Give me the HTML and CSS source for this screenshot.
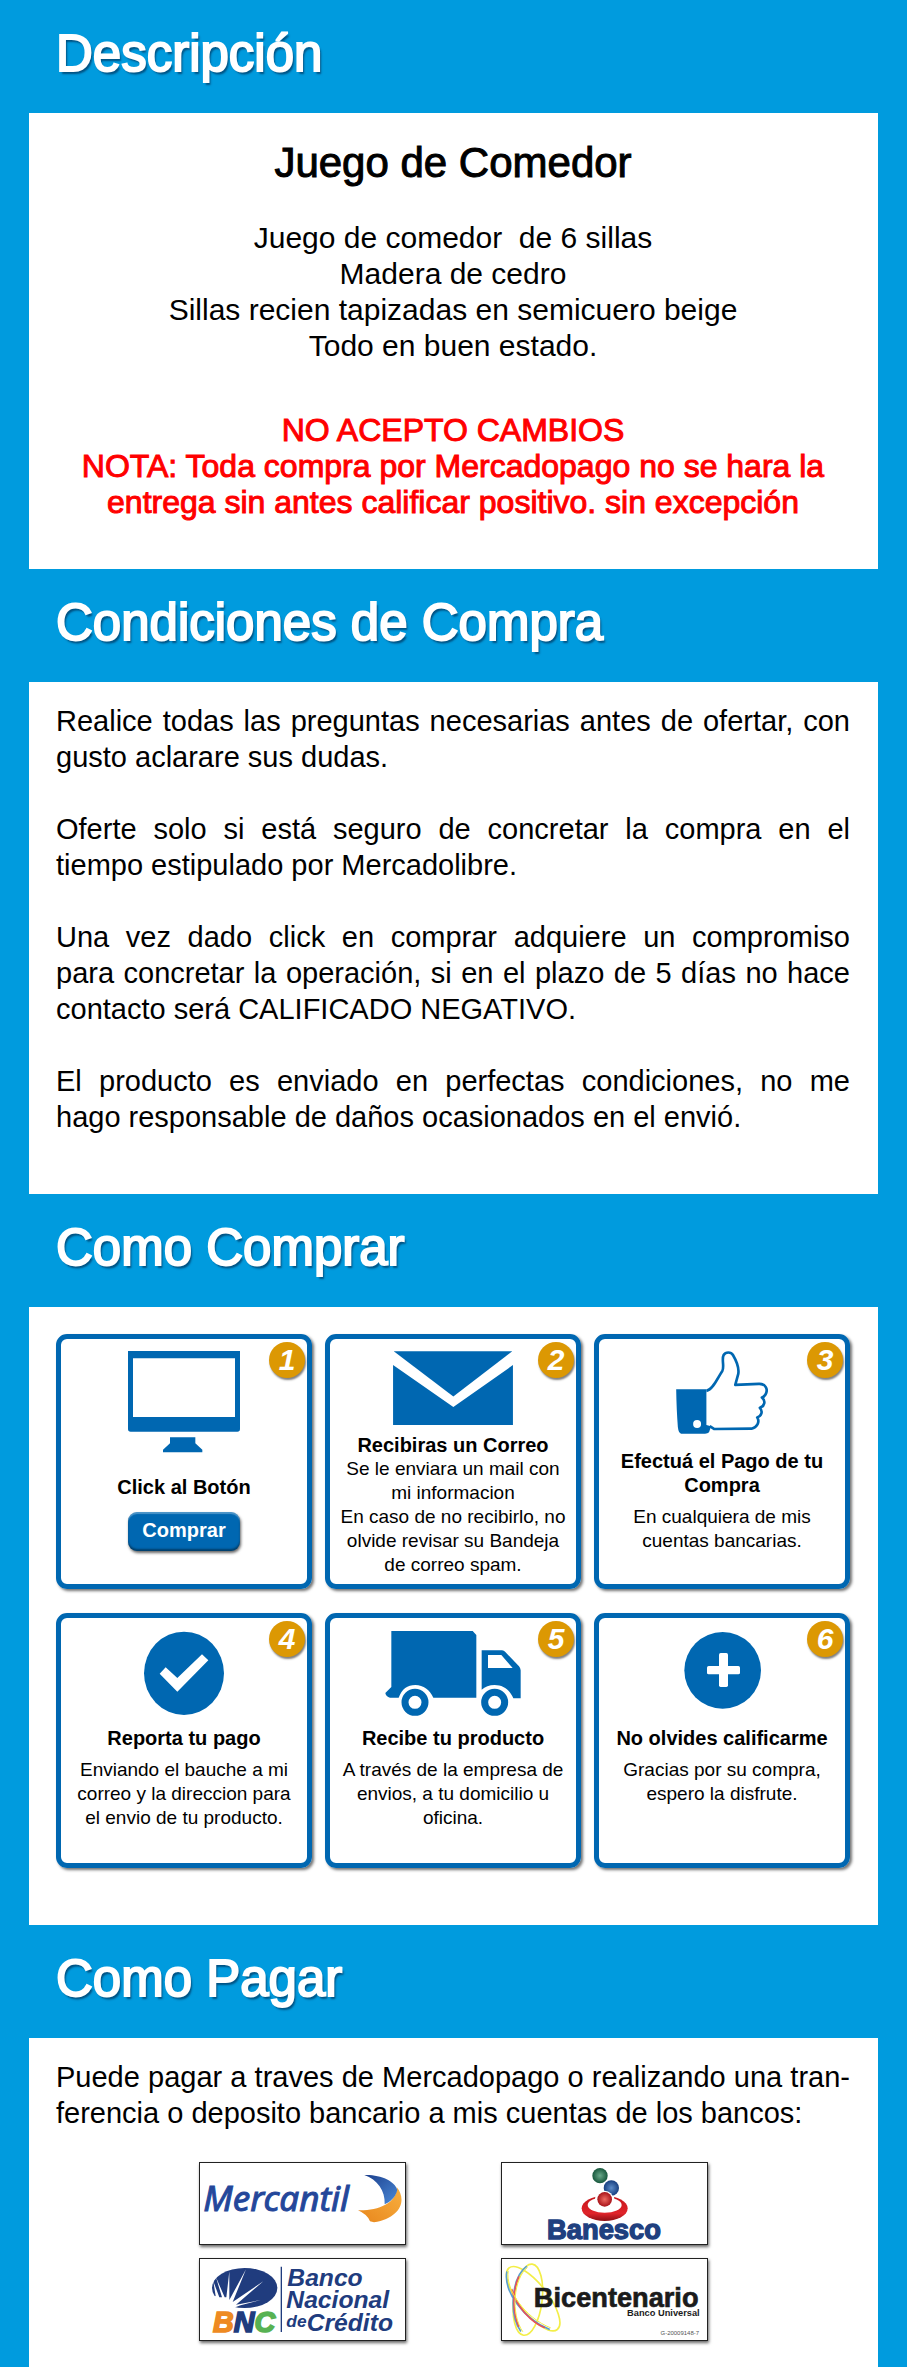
FILE: index.html
```html
<!DOCTYPE html>
<html lang="es">
<head>
<meta charset="utf-8">
<meta name="viewport" content="width=device-width, initial-scale=1">
<title>Juego de Comedor</title>
<link rel="stylesheet" href="styles.css">
</head>
<body class="page">
<main>
  <section>
    <h2 class="section-title">Descripción</h2>
    <div class="panel panel-intro">
      <h1 class="product-title">Juego de Comedor</h1>
      <p class="product-text">Juego de comedor&nbsp; de 6 sillas<br>Madera de cedro<br>Sillas recien tapizadas en semicuero beige<br>Todo en buen estado.</p>
      <p class="warning">NO ACEPTO CAMBIOS<br>NOTA: Toda compra por Mercadopago no se hara la entrega sin antes calificar positivo. sin excepción</p>
    </div>
  </section>

  <section>
    <h2 class="section-title">Condiciones de Compra</h2>
    <div class="panel panel-terms">
      <p class="copy">Realice todas las preguntas necesarias antes de ofertar, con gusto aclarare sus dudas.</p>
      <p class="copy">Oferte solo si está seguro de concretar la compra en el tiempo estipulado por Mercadolibre.</p>
      <p class="copy">Una vez dado click en comprar adquiere un compromiso para&nbsp;concretar la operación, si en el plazo de 5 días no hace contacto será CALIFICADO NEGATIVO.</p>
      <p class="copy">El producto es enviado en perfectas condiciones, no me hago&nbsp;responsable de daños ocasionados en el envió.</p>
    </div>
  </section>

  <section>
    <h2 class="section-title">Como Comprar</h2>
    <div class="panel panel-steps">
      <ol class="steps">
        <li class="step step-buy">
          <span class="badge">1</span>
          <svg class="icon" width="112" height="102" viewBox="264 93 336 306" aria-hidden="true"><path fill-rule="evenodd" d="M264 93H600V327Q600 335 592 335H272Q264 335 264 327ZM279 115V291H585V115Z"/><path d="M390 352H466V370L487 389V397H369V389L390 370Z"/></svg>
          <h3 class="step-title">Click al Botón</h3>
          <button class="buy" type="button">Comprar</button>
        </li>
        <li class="step step-mail">
          <span class="badge">2</span>
          <svg class="icon" width="120" height="74" viewBox="247 94 358 221" aria-hidden="true"><path d="M249 95H603L427 230Z"/><path d="M247 136L427 261L605 136V315H247Z"/></svg>
          <h3 class="step-title">Recibiras un Correo</h3>
          <p class="step-text">Se le enviara un mail con mi informacion</p>
          <p class="step-text">En caso de no recibirlo, no olvide revisar su Bandeja de correo spam.</p>
        </li>
        <li class="step step-pay">
          <span class="badge">3</span>
          <svg class="icon" width="92" height="83" viewBox="297 93 276 250" aria-hidden="true"><path fill-rule="evenodd" d="M297 208H388V316L402 320L396 338Q392 342 384 342H312Q304 340 302 322Q298 270 297 208ZM360 301A12 12 0 1 0 360 325A12 12 0 1 0 360 301Z"/><path class="outline" d="M388 213C408 210 424 170 436 153C443 140 433 118 440 105C446 95 462 95 468 105C478 122 487 144 484 162L475 195L546 192C566 191 575 208 566 224Q562 231 555 233C568 243 563 260 549 264C559 275 554 289 541 293C550 307 540 324 524 327L412 328L398 319"/></svg>
          <h3 class="step-title">Efectuá el Pago de tu Compra</h3>
          <p class="step-text spaced">En cualquiera de mis cuentas bancarias.</p>
        </li>
        <li class="step">
          <span class="badge">4</span>
          <svg class="icon" width="80" height="86" viewBox="310 105 240 258" aria-hidden="true"><ellipse cx="430" cy="235" rx="120" ry="125"/><path class="knockout" d="M357 236L375 217L410 249L484 178L503 196L410 290Z"/></svg>
          <h3 class="step-title">Reporta tu pago</h3>
          <p class="step-text spaced">Enviando el bauche a mi correo y la direccion para el&nbsp;envio de tu producto.</p>
        </li>
        <li class="step">
          <span class="badge">5</span>
          <svg class="icon" width="136" height="86" viewBox="225 105 408 258" aria-hidden="true"><path d="M244 108H488L499 120V308H370C360 285 340 270 316 270C292 270 276 282 266 308H240Q228 305 226 294L244 276Z"/><path fill-rule="evenodd" d="M515 166H576Q582 167 586 171L627 214Q632 220 632 226V310H610C600 285 580 270 554 270C538 270 525 276 515 284ZM534 180V219H608L574 180Z"/><circle class="wheel" cx="315" cy="322" r="30"/><circle class="wheel" cx="554" cy="322" r="30"/></svg>
          <h3 class="step-title">Recibe tu producto</h3>
          <p class="step-text spaced">A través de la empresa de envios, a tu domicilio u oficina.</p>
        </li>
        <li class="step">
          <span class="badge">6</span>
          <svg class="icon" width="77" height="86" viewBox="317 105 231 258" aria-hidden="true"><circle cx="433" cy="226" r="115"/><g class="knockout"><rect x="422" y="174" width="27" height="102" rx="5"/><rect x="386" y="213" width="99" height="25" rx="5"/></g></svg>
          <h3 class="step-title">No olvides calificarme</h3>
          <p class="step-text spaced">Gracias por su compra, espero la disfrute.</p>
        </li>
      </ol>
    </div>
  </section>

  <section>
    <h2 class="section-title">Como Pagar</h2>
    <div class="panel panel-banks">
      <p class="copy">Puede pagar a traves de Mercadopago o realizando una tran-ferencia o deposito bancario a mis cuentas de los bancos:</p>
      <ul class="banks">
        <li class="bank">
          <svg viewBox="58 68 615 243" role="img" aria-label="Mercantil">
            <defs>
              <linearGradient id="sail" x1="0" y1="0" x2="1" y2="1"><stop offset="0" stop-color="#1c3f8c"/><stop offset="1" stop-color="#4a8ad8"/></linearGradient>
              <linearGradient id="hull" x1="0" y1="1" x2="1" y2="0"><stop offset="0" stop-color="#e8861c"/><stop offset="1" stop-color="#f8b040"/></linearGradient>
            </defs>
            <text class="mercantil" x="68" y="211">Mercantil</text>
            <path fill="url(#hull)" d="M648 140C680 180 660 232 580 246L568 243Q560 222 532 210C590 212 650 190 648 140Z"/>
            <path fill="url(#sail)" d="M551 104C600 102 642 122 650 148C645 172 628 184 612 192C614 150 590 118 551 104Z"/>
          </svg>
        </li>
        <li class="bank">
          <svg viewBox="63 68 615 243" role="img" aria-label="Banesco">
            <defs>
              <radialGradient id="green"><stop offset="0" stop-color="#69a889"/><stop offset="1" stop-color="#17573c"/></radialGradient>
              <radialGradient id="blue"><stop offset="0" stop-color="#5d8cc8"/><stop offset="1" stop-color="#173f80"/></radialGradient>
              <radialGradient id="red"><stop offset="0" stop-color="#ee6a62"/><stop offset="1" stop-color="#a81319"/></radialGradient>
              <linearGradient id="ring" x1="0" y1="0" x2="0" y2="1"><stop offset="0" stop-color="#c4161c"/><stop offset="0.7" stop-color="#e0242a"/><stop offset="1" stop-color="#8c0f14"/></linearGradient>
            </defs>
            <ellipse cx="371" cy="204" rx="69" ry="38" fill="url(#ring)"/>
            <ellipse cx="371" cy="194" rx="51" ry="23" fill="#fff"/>
            <circle cx="371" cy="175" r="29" fill="#fff"/>
            <circle cx="357" cy="106" r="23" fill="url(#green)"/>
            <circle cx="391" cy="143" r="23" fill="url(#blue)"/>
            <circle cx="371" cy="177" r="26" fill="#fff"/>
            <circle cx="371" cy="177" r="22" fill="url(#red)"/>
            <text class="banesco" x="198" y="295">Banesco</text>
          </svg>
        </li>
        <li class="bank">
          <svg viewBox="58 355 615 243" role="img" aria-label="Banco Nacional de Crédito">
            <ellipse cx="192" cy="442" rx="98" ry="60" fill="#203c7e"/>
            <path fill="#fff" d="M90 470L105 466L98 422L116 470L124 470L106 410L132 470L137 470L146 392L146 478L196 386L156 484L248 422L166 492L240 478L180 494L150 505L90 505Z"/>
            <text class="bnc" x="97" y="574"><tspan class="bnc-b">B</tspan><tspan class="bnc-n">N</tspan><tspan class="bnc-c">C</tspan></text>
            <path d="M302 378V574" stroke="#203c7e" stroke-width="4"/>
            <g class="bank-name"><text x="320" y="436">Banco</text><text x="317" y="503">Nacional</text><text class="bank-name-small" x="317" y="560">de</text><text x="378" y="571">Crédito</text></g>
          </svg>
        </li>
        <li class="bank">
          <svg viewBox="61 355 618 243" role="img" aria-label="Bicentenario Banco Universal">
            <g fill="none" stroke-width="5">
              <ellipse cx="155" cy="474" rx="118" ry="44" transform="rotate(52 155 474)" stroke="#f3ee48"/>
              <ellipse cx="139" cy="477" rx="108" ry="43" transform="rotate(97 139 477)" stroke="#f3ee48"/>
              <path stroke="#5b9fd0" d="M76 392C64 450 125 535 205 567M136 376C90 408 80 520 118 573"/>
              <path stroke="#e8505c" d="M90 445C105 500 150 545 190 562M112 407C92 450 92 515 112 559"/>
              <path stroke="#f3ee48" d="M80 390C70 445 130 532 208 562M138 380C96 412 86 520 124 574" stroke-width="3"/>
            </g>
            <text class="bicentenario" x="157" y="499">Bicentenario</text>
            <text class="universal" x="657" y="525">Banco Universal</text>
            <text class="tax-id" x="655" y="583">G-20009148-7</text>
          </svg>
        </li>
      </ul>
    </div>
  </section>
</main>
</body>
</html>
```
FILE: styles.css
```css
*,
*::before,
*::after {
  box-sizing: border-box;
}

.page {
  margin: 0;
  padding: 0 29px;
  background: #009bde;
  color: #000;
  font-family: "Liberation Sans", Arial, Helvetica, sans-serif;
}

h1, h2, h3, p, ol, ul {
  margin: 0;
}

.section-title {
  padding: 24px 27px 29px;
  color: #fff;
  font-size: 51px;
  font-weight: 400;
  line-height: 60px;
  -webkit-text-stroke: 2px #fff;
  text-shadow: 2px 3px 2px rgba(0, 50, 90, 0.7);
}

.panel {
  background: #fff;
}

.panel-intro {
  padding: 26px 28px 49px 27px;
  text-align: center;
}

.product-title {
  font-size: 42px;
  font-weight: 400;
  line-height: 48px;
  -webkit-text-stroke: 1px #000;
}

.product-text {
  margin-top: 33px;
  font-size: 30px;
  line-height: 36px;
}

.warning {
  margin-top: 48px;
  color: #f00;
  font-size: 32px;
  line-height: 36px;
  -webkit-text-stroke: 1px #f00;
}

.copy {
  font-size: 29px;
  line-height: 36px;
  text-align: justify;
}

.copy + .copy {
  margin-top: 36px;
}

.panel-terms {
  padding: 21px 28px 59px 27px;
}

.panel-steps {
  padding: 27px 28px 57px 27px;
}

.steps {
  display: grid;
  grid-template-columns: repeat(3, 1fr);
  gap: 24px 13px;
  padding: 0;
  list-style: none;
}

.step {
  position: relative;
  display: flex;
  flex-direction: column;
  align-items: center;
  min-height: 255px;
  padding: 12px 6px 5px;
  border: 5px solid #0067b1;
  border-radius: 11px;
  box-shadow: 2px 2px 3px rgba(0, 0, 0, 0.55);
  text-align: center;
}

.badge {
  position: absolute;
  top: 3px;
  right: 2px;
  width: 36px;
  height: 36px;
  border-radius: 50%;
  background: #dc9803;
  box-shadow: 1px 2px 2px rgba(0, 0, 0, 0.5);
  color: #fff;
  font-size: 30px;
  font-style: italic;
  font-weight: 700;
  line-height: 36px;
}

.icon {
  display: block;
  flex: none;
  margin-bottom: 10px;
  fill: #0067b1;
}

.step-buy .icon {
  margin-bottom: 22px;
}

.step-mail .icon {
  margin-bottom: 8px;
}

.step-pay .icon {
  margin-bottom: 15px;
}

.icon .knockout {
  fill: #fff;
}

.icon .outline {
  fill: none;
  stroke: #0067b1;
  stroke-width: 8;
  stroke-linejoin: round;
}

.icon .wheel {
  fill: none;
  stroke: #0067b1;
  stroke-width: 21;
}

.step-title {
  font-size: 20px;
  line-height: 24px;
}

.step-text {
  font-size: 19px;
  line-height: 24px;
}

.step-text.spaced {
  margin-top: 8px;
}

.buy {
  margin-top: 13px;
  width: 112px;
  height: 39px;
  padding: 0 0 2px;
  border: 0;
  border-radius: 9px;
  background: #0067b1;
  box-shadow: 1px 2px 3px rgba(0, 0, 0, 0.6), inset 0 2px 1px rgba(255, 255, 255, 0.3), inset 0 -2px 2px rgba(0, 0, 0, 0.4);
  color: #fff;
  font-family: inherit;
  font-size: 20px;
  font-weight: 700;
}

.panel-banks {
  padding: 21px 28px 26px 27px;
}

.banks {
  display: grid;
  grid-template-columns: repeat(2, 207px);
  justify-content: center;
  gap: 13px 95px;
  margin-top: 31px;
  padding: 0;
  list-style: none;
}

.bank {
  height: 83px;
  border: 1px solid #222;
  box-shadow: 1px 2px 3px rgba(0, 0, 0, 0.6);
}

.bank svg {
  display: block;
  width: 100%;
  height: 100%;
}

.mercantil {
  fill: #24479a;
  font-family: "Noto Sans", sans-serif;
  font-size: 105px;
  font-style: italic;
  stroke: #24479a;
  stroke-width: 3px;
}

.banesco {
  fill: #20407f;
  stroke: #20407f;
  stroke-width: 4px;
  font-size: 82px;
  font-weight: 700;
}

.bnc {
  font-size: 86px;
  font-style: italic;
  font-weight: 700;
  stroke-width: 5px;
}

.bnc-b {
  fill: #ee8a22;
  stroke: #ee8a22;
}

.bnc-n {
  fill: #203c7e;
  stroke: #203c7e;
}

.bnc-c {
  fill: #58b253;
  stroke: #58b253;
}

.bank-name {
  fill: #203c7e;
  font-size: 74px;
  font-style: italic;
  font-weight: 700;
}

.bank-name-small {
  font-size: 52px;
}

.bicentenario {
  fill: #1b1b1b;
  stroke: #1b1b1b;
  stroke-width: 2px;
  font-size: 82px;
  font-weight: 700;
}

.universal {
  fill: #1b1b1b;
  font-size: 28px;
  font-weight: 700;
  text-anchor: end;
}

.tax-id {
  fill: #555;
  font-size: 18px;
  text-anchor: end;
}
```
